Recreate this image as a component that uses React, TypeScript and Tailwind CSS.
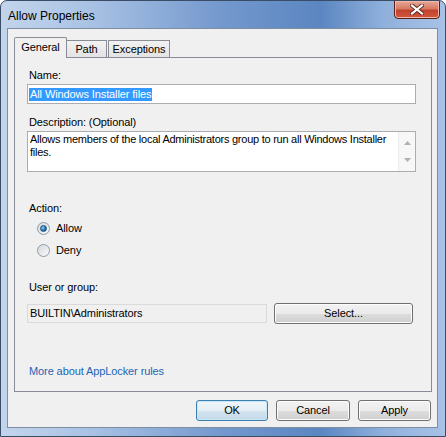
import { useState } from "react";

const font = { fontFamily: '"Liberation Sans", Arial, sans-serif' };

function Radio({ checked, label, onClick }: { checked: boolean; label: string; onClick: () => void }) {
  return (
    <div className="flex items-center h-[13px] cursor-default" onClick={onClick}>
      <span className="ml-[10px] w-[13px] h-[13px] rounded-full border border-[#8e9aa6] bg-[linear-gradient(135deg,#d4d8dd,#fafafa)] flex items-center justify-center">
        {checked && (
          <span className="w-[7px] h-[7px] rounded-full bg-[radial-gradient(circle_at_35%_35%,#8fd0f5,#1b6fb0_60%,#0e4a7c)] border border-[#1c4f7a]" />
        )}
      </span>
      <span className="ml-[6px] text-[11px] leading-[13px]">{label}</span>
    </div>
  );
}

function Btn({ label, primary, className }: { label: string; primary?: boolean; className?: string }) {
  return (
    <button
      className={
        "h-[21px] rounded-[3px] border text-[11px] leading-[13px] text-black " +
        (primary
          ? "border-[#3c7fb1] shadow-[inset_0_0_0_1px_#c8e8fa] bg-[linear-gradient(#f0f6fa_0%,#e4eef5_50%,#d3e3ee_51%,#c6dae8_100%)] "
          : "border-[#707070] shadow-[inset_0_0_0_1px_#fcfcfc] bg-[linear-gradient(#f2f2f2_0%,#ebebeb_50%,#dddddd_51%,#cfcfcf_100%)] ") +
        (className ?? "")
      }
    >
      {label}
    </button>
  );
}

export default function App() {
  const [action, setAction] = useState("allow");

  return (
    <div style={font} className="w-[446px] h-[437px] flex flex-col rounded-t-[7px] border border-[#3a4c66] bg-[linear-gradient(90deg,#c3d5ec_0%,#a9c2e4_20%,#7398cd_50%,#5b86c1_72%,#8fb0dc_86%,#a8c2e6_100%)] overflow-hidden text-black tracking-[-0.1px]">
      {/* title bar */}
      <div className="h-[27px] flex items-start justify-between">
        <span className="ml-[7px] mt-[8px] text-[12px] leading-[14px] text-black tracking-normal">Allow Properties</span>
        <div className="mr-[5px] w-[46px] h-[19px] -mt-px rounded-b-[4px] border border-[#5a1f16] bg-[linear-gradient(#e9a898_0%,#d77a64_45%,#c2432b_55%,#d0583e_100%)] shadow-[inset_0_0_0_1px_#f0b9aa] flex items-center justify-center">
          <svg width="14" height="11" viewBox="0 0 14 11">
            <path d="M2 1.5 L12 9.5 M12 1.5 L2 9.5" stroke="#5a2a22" strokeWidth="4" strokeLinecap="square" />
            <path d="M2 1.5 L12 9.5 M12 1.5 L2 9.5" stroke="#ffffff" strokeWidth="2.2" strokeLinecap="square" />
          </svg>
        </div>
      </div>

      {/* client area */}
      <div className="ml-[6px] mr-[7px] mb-[8px] flex-1 border border-[#7f8fa3] bg-[#f0f0f0] flex flex-col pt-[8px] pl-[6px] pr-[5px]">
        <div className="flex items-end h-[20px]">
          <div className="relative z-10 -mb-px w-[53px] h-[21px] border border-b-0 border-[#898c95] bg-[#f0f0f0] rounded-t-[2px] text-[11px] leading-[17px] pt-[1px] text-center">
            General
          </div>
          <div className="w-[40px] h-[17px] border border-b-0 border-l-0 border-[#898c95] bg-[linear-gradient(#f2f2f2,#e3e3e3)] text-[11px] leading-[16px] text-center">
            Path
          </div>
          <div className="ml-px w-[62px] h-[17px] border border-b-0 border-[#898c95] bg-[linear-gradient(#f2f2f2,#e3e3e3)] text-[11px] leading-[16px] text-center">
            Exceptions
          </div>
        </div>

        <div className="h-[335px] border border-[#898c95] bg-[#f0f0f0] flex flex-col px-[12px]">
          <div className="mt-[11px] ml-[2px] text-[11px] leading-[13px]">Name:</div>
          <div className="mt-[2px] w-[389px] h-[20px] border border-[#abadb3] bg-white flex items-center px-[1px]">
            <span className="bg-[#3399ff] text-white text-[11px] leading-[13px] px-[1px]">All Windows Installer files</span>
          </div>

          <div className="mt-[12px] ml-[2px] text-[11px] leading-[13px]">Description: (Optional)</div>
          <div className="mt-[2px] w-[389px] h-[41px] border border-[#abadb3] bg-white flex">
            <div className="flex-1 pl-[2px] pt-[1px] text-[11px] leading-[13px] tracking-[-0.25px]">
              Allows members of the local Administrators group to run all Windows Installer files.
            </div>
            <div className="w-[17px] bg-[#f7f7f7] border-l border-[#ececec] flex flex-col items-center justify-between py-[9px]">
              <svg width="7" height="4" viewBox="0 0 7 4"><path d="M0 4 L3.5 0 L7 4 Z" fill="#b0b0b0" /></svg>
              <svg width="7" height="4" viewBox="0 0 7 4"><path d="M0 0 L3.5 4 L7 0 Z" fill="#b0b0b0" /></svg>
            </div>
          </div>

          <div className="mt-[30px] ml-[2px] text-[11px] leading-[13px]">Action:</div>
          <div className="mt-[7px]">
            <Radio checked={action === "allow"} label="Allow" onClick={() => setAction("allow")} />
          </div>
          <div className="mt-[9px]">
            <Radio checked={action === "deny"} label="Deny" onClick={() => setAction("deny")} />
          </div>

          <div className="mt-[24px] ml-[2px] text-[11px] leading-[13px]">User or group:</div>
          <div className="mt-[9px] flex items-start">
            <div className="mt-[1px] w-[240px] h-[19px] border border-[#dadada] bg-[#f0f0f0] px-[2px] text-[11px] leading-[17px]">
              BUILTIN\Administrators
            </div>
            <Btn label="Select..." className="ml-[7px] w-[139px]" />
          </div>

          <div className="mt-[41px] ml-[2px] text-[11px] leading-[13px] text-[#1e64b4]">More about AppLocker rules</div>
        </div>

        <div className="mt-[8px] flex justify-end gap-[8px] pr-[1px]">
          <Btn label="OK" primary className="w-[72px]" />
          <Btn label="Cancel" className="w-[74px]" />
          <Btn label="Apply" className="w-[73px]" />
        </div>
      </div>
    </div>
  );
}
